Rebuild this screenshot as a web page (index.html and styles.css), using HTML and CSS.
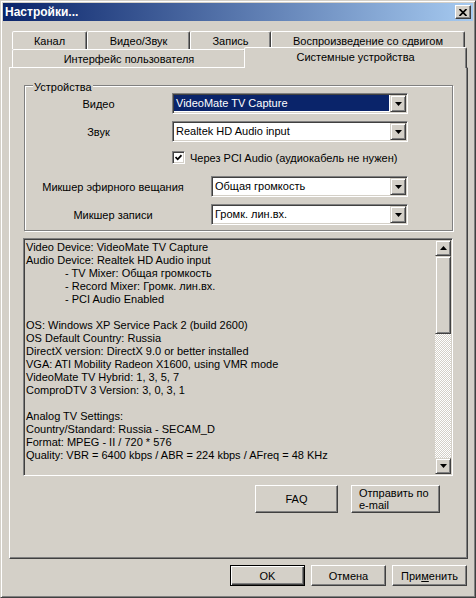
FILE: index.html
```html
<!DOCTYPE html>
<html lang="ru">
<head>
<meta charset="utf-8">
<title>Настройки</title>
<link rel="stylesheet" href="styles.css">
</head>
<body>
<div class="window">
  <div class="titlebar">
    <span class="title">Настройки...</span>
    <button class="close" aria-label="Закрыть"><svg width="8" height="7" viewBox="0 0 8 7"><path d="M0.5 0 L7.5 7 M7.5 0 L0.5 7" stroke="#000" stroke-width="1.7"/></svg></button>
  </div>
  <div class="client">
    <div class="tabs">
      <div class="tabrow">
        <div class="tab t1">Канал</div>
        <div class="tab t2">Видео/Звук</div>
        <div class="tab t3">Запись</div>
        <div class="tab t4">Воспроизведение со сдвигом</div>
      </div>
      <div class="tabrow">
        <div class="tab t5">Интерфейс пользователя</div>
        <div class="tab selected">Системные устройства</div>
      </div>
      <div class="panel">
        <div class="group">
          <div class="group-title">Устройства</div>
          <div class="row">
            <span class="lbl lbl-a">Видео</span>
            <div class="combo w1">
              <span class="combo-text hl">VideoMate TV Capture</span>
              <span class="dd"><svg width="7" height="4" viewBox="0 0 7 4"><path d="M0 0h7L3.5 4z" fill="#000"/></svg></span>
            </div>
          </div>
          <div class="row r-sound">
            <span class="lbl lbl-a">Звук</span>
            <div class="combo w1">
              <span class="combo-text">Realtek HD Audio input</span>
              <span class="dd"><svg width="7" height="4" viewBox="0 0 7 4"><path d="M0 0h7L3.5 4z" fill="#000"/></svg></span>
            </div>
          </div>
          <div class="chk-row">
            <span class="chk"><svg width="7" height="7" viewBox="0 0 7 7"><path d="M0.5 3 L2.7 5.3 L6.5 1.2" stroke="#000" stroke-width="1.8" fill="none"/></svg></span>
            <span class="chk-lbl">Через PCI Audio (аудиокабель не нужен)</span>
          </div>
          <div class="row r-mix">
            <span class="lbl lbl-b">Микшер эфирного вещания</span>
            <div class="combo w2">
              <span class="combo-text">Общая громкость</span>
              <span class="dd"><svg width="7" height="4" viewBox="0 0 7 4"><path d="M0 0h7L3.5 4z" fill="#000"/></svg></span>
            </div>
          </div>
          <div class="row r-rec">
            <span class="lbl lbl-b">Микшер записи</span>
            <div class="combo w2">
              <span class="combo-text">Громк. лин.вх.</span>
              <span class="dd"><svg width="7" height="4" viewBox="0 0 7 4"><path d="M0 0h7L3.5 4z" fill="#000"/></svg></span>
            </div>
          </div>
        </div>
        <div class="info">
          <div class="info-text">
            <div>Video Device: VideoMate TV Capture</div>
            <div>Audio Device: Realtek HD Audio input</div>
            <div class="ind">- TV Mixer: Общая громкость</div>
            <div class="ind">- Record Mixer: Громк. лин.вх.</div>
            <div class="ind">- PCI Audio Enabled</div>
            <div class="blank"></div>
            <div>OS: Windows XP Service Pack 2 (build 2600)</div>
            <div>OS Default Country: Russia</div>
            <div>DirectX version: DirectX 9.0 or better installed</div>
            <div>VGA: ATI Mobility Radeon X1600, using VMR mode</div>
            <div>VideoMate TV Hybrid: 1, 3, 5, 7</div>
            <div>ComproDTV 3 Version: 3, 0, 3, 1</div>
            <div class="blank"></div>
            <div>Analog TV Settings:</div>
            <div>Country/Standard: Russia - SECAM_D</div>
            <div>Format: MPEG - II / 720 * 576</div>
            <div>Quality: VBR = 6400 kbps / ABR = 224 kbps / AFreq = 48 KHz</div>
          </div>
          <div class="sb">
            <span class="sb-btn"><svg width="7" height="4" viewBox="0 0 7 4"><path d="M0 4h7L3.5 0z" fill="#000"/></svg></span>
            <span class="sb-thumb"></span>
            <span class="sb-track"></span>
            <span class="sb-btn"><svg width="7" height="4" viewBox="0 0 7 4"><path d="M0 0h7L3.5 4z" fill="#000"/></svg></span>
          </div>
        </div>
        <div class="links">
          <button class="btn faq">FAQ</button>
          <button class="btn mail">Отправить по<br>e-mail</button>
        </div>
      </div>
    </div>
    <div class="footer">
      <button class="btn fbtn default">OK</button>
      <button class="btn fbtn">Отмена</button>
      <button class="btn fbtn">При<u>м</u>енить</button>
    </div>
  </div>
</div>
</body>
</html>
```

FILE: styles.css
```css
* { box-sizing: border-box; }
html, body { margin: 0; padding: 0; background: #d4d0c8; }
body {
  font-family: "Liberation Sans", Arial, sans-serif;
  font-size: 11px;
  color: #000;
}
.window {
  width: 476px;
  height: 598px;
  border: 1px solid;
  border-color: #d4d0c8 #404040 #404040 #d4d0c8;
  box-shadow: inset 1px 1px #fff, inset -1px -1px #808080;
  padding: 2px;
  background: #d4d0c8;
  display: flex;
  flex-direction: column;
}
.titlebar {
  flex: none;
  height: 18px;
  background: linear-gradient(to right, #0a246a, #a6caf0);
  display: flex;
  align-items: center;
  justify-content: space-between;
  padding: 0 2px 0 2px;
}
.title {
  color: #fff;
  font-weight: bold;
  font-size: 12px;
  line-height: 14px;
}
.close {
  width: 16px;
  height: 14px;
  padding: 0;
  border: 1px solid;
  border-color: #fff #404040 #404040 #fff;
  box-shadow: inset -1px -1px #808080;
  background: #d4d0c8;
  display: flex;
  align-items: center;
  justify-content: center;
}
.close svg { display: block; }
.client {
  flex: 1;
  padding: 10px 5px 0 6px;
}
.tabs { width: 459px; }
.tabrow {
  display: flex;
  align-items: flex-end;
  height: 18px;
  padding-left: 3px;
}
.tab {
  flex: none;
  height: 18px;
  border: 1px solid;
  border-bottom: none;
  border-color: #fff #404040 transparent #fff;
  box-shadow: inset -1px 0 #808080;
  border-radius: 2px 2px 0 0;
  display: flex;
  align-items: center;
  justify-content: center;
  white-space: nowrap;
  background: #d4d0c8;
}
.t1 { width: 75px; }
.t2 { width: 103px; }
.t3 { width: 81px; }
.t4 { width: 194px; }
.t5 { width: 234px; }
.tab.selected {
  width: 223px;
  height: 21px;
  margin: 0 0 -1px -2px;
  position: relative;
  z-index: 2;
  padding-bottom: 2px;
}
.panel {
  height: 492px;
  border: 1px solid;
  border-color: #fff #404040 #404040 #fff;
  box-shadow: inset -1px -1px #808080;
  background: #d4d0c8;
}
.group {
  margin: 17px 0 0 14px;
  width: 429px;
  border: 1px solid #808080;
  box-shadow: inset 1px 1px #fff, 1px 1px #fff;
  padding: 0 0 5px 0;
}
.group-title {
  width: max-content;
  margin: -5px 0 0 8px;
  padding: 0 1px;
  height: 12px;
  line-height: 12px;
  background: #d4d0c8;
}
.row {
  display: flex;
  align-items: center;
  height: 21px;
}
.r-sound { margin-top: 7px; }
.r-mix { margin-top: 12px; }
.r-rec { margin-top: 7px; }
.lbl { flex: none; text-align: center; white-space: nowrap; }
.lbl-a { width: 147px; }
.lbl-b { width: 176px; margin-right: 10px; }
.combo {
  flex: none;
  height: 21px;
  border: 1px solid;
  border-color: #808080 #fff #fff #808080;
  box-shadow: inset 1px 1px #404040, inset -1px -1px #d4d0c8;
  background: #fff;
  padding: 1px;
  display: flex;
}
.w1 { width: 236px; }
.w2 { width: 197px; }
.combo-text {
  flex: 1;
  display: flex;
  align-items: center;
  padding-left: 2px;
  margin: 0 1px 1px 0;
  white-space: nowrap;
  overflow: hidden;
}
.combo-text.hl { background: #0a246a; color: #fff; }
.dd {
  flex: none;
  width: 16px;
  height: 17px;
  border: 1px solid;
  border-color: #d4d0c8 #404040 #404040 #d4d0c8;
  box-shadow: inset 1px 1px #fff, inset -1px -1px #808080;
  background: #d4d0c8;
  display: flex;
  align-items: center;
  justify-content: center;
}
.dd svg, .sb-btn svg, .chk svg { display: block; }
.chk-row {
  display: flex;
  align-items: center;
  height: 13px;
  margin-top: 9px;
  padding-left: 147px;
}
.chk {
  flex: none;
  width: 13px;
  height: 13px;
  border: 1px solid;
  border-color: #808080 #fff #fff #808080;
  box-shadow: inset 1px 1px #404040, inset -1px -1px #d4d0c8;
  background: #fff;
  display: flex;
  align-items: center;
  justify-content: center;
}
.chk-lbl { margin-left: 5px; white-space: nowrap; }
.info {
  margin: 7px 0 0 13px;
  width: 430px;
  height: 238px;
  border: 1px solid;
  border-color: #808080 #fff #fff #808080;
  box-shadow: inset 1px 1px #404040, inset -1px -1px #d4d0c8;
  background: #d4d0c8;
  padding: 1px;
  display: flex;
}
.info-text {
  flex: 1;
  padding: 1px 0 0 1px;
  line-height: 13px;
  white-space: nowrap;
  overflow: hidden;
}
.info-text .ind { padding-left: 39px; }
.info-text .blank { height: 13px; }
.sb {
  flex: none;
  width: 16px;
  display: flex;
  flex-direction: column;
}
.sb-btn, .sb-thumb {
  flex: none;
  border: 1px solid;
  border-color: #d4d0c8 #404040 #404040 #d4d0c8;
  box-shadow: inset 1px 1px #fff, inset -1px -1px #808080;
  background: #d4d0c8;
}
.sb-btn {
  height: 16px;
  display: flex;
  align-items: center;
  justify-content: center;
}
.sb-thumb { height: 78px; }
.sb-track {
  flex: 1;
  background: repeating-conic-gradient(#fff 0 25%, #d4d0c8 0 50%) 0 0 / 2px 2px;
}
.btn {
  font-family: inherit;
  font-size: 11px;
  color: #000;
  background: #d4d0c8;
  border: 1px solid;
  border-color: #fff #404040 #404040 #fff;
  box-shadow: inset -1px -1px #808080;
  padding: 0;
  margin: 0;
}
.links {
  display: flex;
  justify-content: flex-end;
  gap: 13px;
  margin: 9px 27px 0 0;
}
.faq { width: 83px; height: 28px; }
.mail {
  width: 89px;
  height: 28px;
  text-align: left;
  padding-left: 7px;
  line-height: 12px;
}
.footer {
  display: flex;
  justify-content: flex-end;
  gap: 6px;
  margin: 6px 1px 0 0;
}
.fbtn { width: 75px; height: 21px; }
.fbtn.default {
  border-color: #000;
  box-shadow: inset 1px 1px #fff, inset -1px -1px #404040, inset -2px -2px #808080;
}
```
